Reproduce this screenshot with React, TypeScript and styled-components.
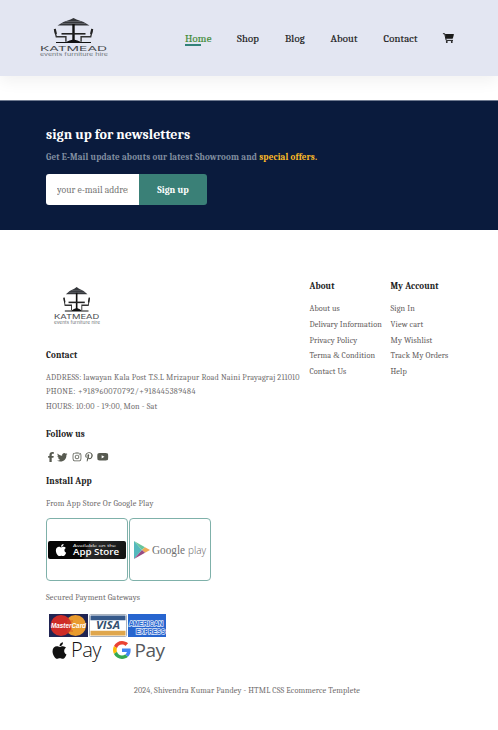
import React from "react";
import styled, { createGlobalStyle } from "styled-components";
import { FaTwitter, FaInstagram, FaPinterestP, FaYoutube, FaApple } from "react-icons/fa";
import { FaFacebookF } from "react-icons/fa6";

const GlobalStyle = createGlobalStyle`
  * { box-sizing: border-box; margin: 0; padding: 0; }
  body { background: #fff; font-family: Cambria, Caladea, "Liberation Serif", serif; color: #222; overflow: hidden; }
  svg { display: block; overflow: visible; }
`;

const Page = styled.div`width: 498px; height: 730px; overflow: hidden;`;

const Header = styled.header`
  display: flex;
  justify-content: space-between;
  height: 76px;
  padding: 17px 44px 0 40px;
  background: #e3e6f2;
  box-shadow: 0 5px 15px rgba(0, 0, 0, 0.06);
`;

const Nav = styled.nav`
  display: flex;
  align-items: flex-start;
  padding-top: 15px;
`;

const NavLink = styled.a<{ $active?: boolean; $width: number }>`
  position: relative;
  width: ${(p) => p.$width}px;
  font-size: 10.6px;
  line-height: 14px;
  -webkit-text-stroke: 0.18px currentColor;
  letter-spacing: 0.19px;
  white-space: nowrap;
  color: ${(p) => (p.$active ? "#3d8a35" : "#1a1a1a")};
  ${(p) =>
    p.$active &&
    `&::after { content: ""; position: absolute; left: 0; bottom: 0; width: 16px; height: 2px; background: #328279; }`}
`;

const CartLink = styled.a`padding-top: 1px; color: #1a1a1a;`;

const Newsletter = styled.section`
  height: 130px;
  margin-top: 24px;
  padding: 25px 46px 0;
  border-top: 1px solid #6f7a90;
  background: #0a1b3d;
`;

const NewsTitle = styled.h4`
  font-size: 14px;
  line-height: 18px;
  color: #fff;
`;

const NewsText = styled.p`
  margin-top: 7px;
  font-size: 9px;
  line-height: 12px;
  font-weight: 700;
  letter-spacing: 0.16px;
  white-space: nowrap;
  color: #818ea0;
  span { color: #ffbd27; }
`;

const Form = styled.form`
  display: flex;
  width: 161px;
  height: 31px;
  margin-top: 11px;
`;

const EmailInput = styled.input`
  width: 93px;
  padding: 0 11px;
  border: 0;
  border-radius: 3px 0 0 3px;
  background: #fff;
  font: 9.7px Cambria, Caladea, serif;
  &::placeholder { color: #757575; }
`;

const SignUp = styled.button`
  width: 68px;
  border: 0;
  border-radius: 0 3px 3px 0;
  background: #3a8077;
  color: #fff;
  font: 700 9.5px Cambria, Caladea, serif;
`;

const Footer = styled.footer`
  display: flex;
  height: 450px;
  padding: 50px 46px 0;
`;

const Info = styled.div`width: 263.5px; padding-top: 5.5px;`;
const FooterLogo = styled.div`height: 63.5px; padding-left: 8px;`;

const Heading = styled.h4<{ $gap?: number }>`
  margin-top: ${(p) => p.$gap ?? 0}px;
  font-size: 9px;
  line-height: 12px;
  letter-spacing: 0.12px;
  white-space: nowrap;
  color: #222;
`;

const Line = styled.p<{ $gap?: number; $spacing?: number }>`
  margin-top: ${(p) => p.$gap ?? 0}px;
  font-size: 8.2px;
  line-height: 14.6px;
  letter-spacing: ${(p) => p.$spacing ?? 0.165}px;
  white-space: nowrap;
  color: #706e6e;
`;

const Social = styled.div`
  display: flex;
  align-items: center;
  height: 12px;
  margin-top: 11px;
  color: #575a50;
`;

const SocialIcon = styled.a<{ $width: number }>`width: ${(p) => p.$width}px;`;

const Column = styled.div<{ $width: number }>`width: ${(p) => p.$width}px;`;
const LinkList = styled.div<{ $spacing: number }>`
  display: grid;
  margin-top: 9px;
  grid-auto-rows: 15.7px;
  align-items: center;
  font-size: 8.2px;
  letter-spacing: ${(p) => p.$spacing}px;
  white-space: nowrap;
  color: #5f5c5c;
`;
const Ampersand = styled.span`font-family: "Liberation Serif", serif;`;

const Stores = styled.div`display: flex; gap: 1px; margin-top: 7px;`;
const StoreBox = styled.div`
  display: flex;
  align-items: center;
  justify-content: center;
  width: 82px;
  height: 63px;
  border: 1px solid #7fb1aa;
  border-radius: 4px;
`;

const AppBadge = styled.div`
  display: flex;
  align-items: center;
  flex-shrink: 0;
  gap: 5px;
  width: 78px;
  height: 18px;
  padding-left: 6px;
  border-radius: 2px;
  background: linear-gradient(110deg, #050505 48%, #2c2c2c 52%, #111);
  color: #fff;
`;

const Payments = styled.div`
  display: grid;
  grid-template-columns: 40px 38.5px 38px;
  width: 117px;
  margin: 9px 0 0 3px;
`;

const Wallets = styled.div`
  display: flex;
  align-items: center;
  height: 26px;
  margin-left: 4px;
`;

const Wallet = styled.div<{ $width: number; $bold?: boolean }>`
  display: flex;
  align-items: center;
  gap: ${(p) => (p.$bold ? 4 : 2)}px;
  width: ${(p) => p.$width}px;
  font-family: "Open Sans", sans-serif;
  font-size: ${(p) => (p.$bold ? 19 : 20)}px;
  line-height: 26px;
  letter-spacing: -0.5px;
  font-weight: ${(p) => (p.$bold ? 500 : 300)};
  color: ${(p) => (p.$bold ? "#55585c" : "#111")};
`;

const Copyright = styled.p`
  margin-top: 4px;
  padding-left: 134px;
  font-size: 8.2px;
  line-height: 14px;
  letter-spacing: 0.135px;
  white-space: nowrap;
  color: #706e6e;
`;

const Logo = ({ width, height }: { width: number; height: number }) => (
  <svg width={width} height={height} viewBox="0 0 68 40" preserveAspectRatio="none">
    <path d="M17.5 8.5Q23 4.6 30.5 2.6L33.5 1L36.5 2.6Q44 4.6 49.5 8.5Z" fill="#34363a" />
    <path d="M26 4.5h15M21.5 6.5h24" stroke="#888b91" strokeWidth=".5" />
    <path d="M33.5 7v18" stroke="#111" strokeWidth="2.4" />
    <path d="M21.5 16.8h24" stroke="#222" strokeWidth="1.6" />
    <path d="M14.5 12l1.8 7.8h9.6v5M52.5 12l-1.8 7.8h-9.6v5" fill="none" stroke="#333" strokeWidth="1.4" />
    <path d="M14.8 12l1.2 5M52.2 12l-1.2 5" stroke="#222" strokeWidth="2" />
    <path d="M16 25h35v1.1h-35zM25.5 25.3q4-2.4 8-2.8q4 .4 8 2.8z" fill="#111" />
    <text x="0" y="33.5" textLength="67" lengthAdjust="spacingAndGlyphs" fontFamily="Inter, sans-serif" fontSize="6.8" fill="#44464a">KATMEAD</text>
    <text x="0" y="38.8" textLength="68" lengthAdjust="spacingAndGlyphs" fontFamily="Inter, sans-serif" fontSize="4.2" fill="#70757a">events furniture hire</text>
  </svg>
);

const Cart = () => (
  <svg width="11" height="10" viewBox="0 0 11 10">
    <path d="M.3.7h1.4l1.5 6.7h6.4" fill="none" stroke="currentColor" strokeWidth="1" strokeLinecap="round" strokeLinejoin="round" />
    <path d="M2 .9h8.5q.5 0 .4.5l-1 3.9q-.1.4-.6.4H3z" fill="currentColor" />
    <circle cx="3.8" cy="9" r=".95" fill="currentColor" />
    <circle cx="8.8" cy="9" r=".95" fill="currentColor" />
  </svg>
);

const BadgeText = () => (
  <svg width="48" height="16" viewBox="0 0 48 16" fontFamily="Open Sans, sans-serif" fill="#fff">
    <text x="0" y="5" textLength="43" lengthAdjust="spacingAndGlyphs" fontSize="4">Available on the</text>
    <text x="0" y="13.2" textLength="46" lengthAdjust="spacingAndGlyphs" fontSize="8.2" fontWeight="600">App Store</text>
  </svg>
);

const GooglePlay = () => (
  <svg width="74" height="22" viewBox="0 0 74 22">
    <path d="M1 2L9 11L1 20Z" fill="#55b9bd" />
    <path d="M1 2L12 8.3L9 11Z" fill="#68c59b" />
    <path d="M12 8.3L17 11L12 13.8L9 11Z" fill="#efaa55" />
    <path d="M1 20L9 11L12 13.8Z" fill="#984b83" />
    <text x="19" y="15.2" textLength="33" lengthAdjust="spacingAndGlyphs" fontFamily="Liberation Serif, serif" fontSize="13" fill="#707070">Google</text>
    <text x="55" y="15.2" textLength="18" lengthAdjust="spacingAndGlyphs" fontFamily="Open Sans, sans-serif" fontWeight="300" fontSize="11.5" fill="#606060">play</text>
  </svg>
);

const MasterCard = () => (
  <svg width="39" height="23" viewBox="0 0 39 23">
    <rect width="39" height="23" fill="#202452" />
    <circle cx="26.5" cy="11.5" r="10.5" fill="#e99b2e" />
    <circle cx="12" cy="11.5" r="10.5" fill="#ce2c27" />
    <path d="M18 7h6M18 9h5M18 15h5M18 17h6" stroke="#d44b2a" strokeWidth=".8" />
    <text x="2" y="14" textLength="35" lengthAdjust="spacingAndGlyphs" fontFamily="Liberation Sans, sans-serif" fontSize="7" fontWeight="700" fontStyle="italic" fill="#fff">MasterCard</text>
  </svg>
);

const Visa = () => (
  <svg width="38" height="23" viewBox="0 0 38 23">
    <rect x=".5" y=".5" width="37" height="22" rx="1" fill="#fff" stroke="#a9b2bd" />
    <path d="M1.5 1.5h35v4.8h-35z" fill="#36598a" />
    <path d="M1.5 16.7h35v4.8h-35z" fill="#dfa64c" />
    <text x="7" y="15" textLength="24" lengthAdjust="spacingAndGlyphs" fontFamily="Open Sans, sans-serif" fontSize="10" fontWeight="700" fontStyle="italic" fill="#34506f">VISA</text>
  </svg>
);

const Amex = () => (
  <svg width="38" height="23" viewBox="0 0 38 23">
    <rect width="38" height="23" fill="#2765cf" />
    <g fontFamily="Liberation Sans, sans-serif" fontSize="6.3" fontWeight="700" fill="#2765cf" stroke="#e0e9fa" strokeWidth="1.4" paintOrder="stroke">
      <text x="1" y="12.2" textLength="34" lengthAdjust="spacingAndGlyphs">AMERICAN</text>
      <text x="8" y="20" textLength="29" lengthAdjust="spacingAndGlyphs">EXPRESS</text>
    </g>
  </svg>
);

const GoogleG = () => (
  <svg width="18" height="18" viewBox="0 0 48 48">
    <path fill="#EA4335" d="M24 9.5c3.54 0 6.71 1.22 9.21 3.6l6.85-6.85C35.9 2.38 30.47 0 24 0 14.62 0 6.51 5.38 2.56 13.22l7.98 6.19C12.43 13.72 17.74 9.5 24 9.5z" />
    <path fill="#4285F4" d="M46.98 24.55c0-1.57-.15-3.09-.38-4.55H24v9.02h12.94c-.58 2.96-2.26 5.48-4.78 7.18l7.73 6c4.51-4.18 7.09-10.36 7.09-17.65z" />
    <path fill="#FBBC05" d="M10.53 28.59A14.5 14.5 0 0 1 9.77 24c0-1.6.27-3.14.76-4.59l-7.98-6.19A24 24 0 0 0 0 24c0 3.88.92 7.54 2.56 10.78z" />
    <path fill="#34A853" d="M24 48c6.48 0 11.93-2.13 15.89-5.81l-7.73-6c-2.15 1.45-4.92 2.3-8.16 2.3-6.26 0-11.57-4.22-13.47-9.91l-7.98 6.19C6.51 42.62 14.62 48 24 48z" />
  </svg>
);

export default function App() {
  return (
    <Page>
      <GlobalStyle />
      <Header>
        <Logo width={68} height={40} />
        <Nav>
          <NavLink $active $width={52}>Home</NavLink>
          <NavLink $width={48}>Shop</NavLink>
          <NavLink $width={45.5}>Blog</NavLink>
          <NavLink $width={53}>About</NavLink>
          <NavLink $width={59.5}>Contact</NavLink>
          <CartLink><Cart /></CartLink>
        </Nav>
      </Header>
      <Newsletter>
        <NewsTitle>sign up for newsletters</NewsTitle>
        <NewsText>Get E-Mail update abouts our latest Showroom and <span>special offers.</span></NewsText>
        <Form>
          <EmailInput placeholder="your e-mail address" />
          <SignUp type="button">Sign up</SignUp>
        </Form>
      </Newsletter>
      <Footer>
        <Info>
          <FooterLogo><Logo width={46} height={39} /></FooterLogo>
          <Heading>Contact</Heading>
          <Line $gap={9.6}>ADDRESS: lawayan Kala Post T.S.L Mrizapur Road Naini Prayagraj 211010</Line>
          <Line $spacing={0.43}>PHONE: +918960070792/+918445389484</Line>
          <Line $spacing={0.18}>HOURS: 10:00 - 19:00, Mon - Sat</Line>
          <Heading $gap={13.4}>Follow us</Heading>
          <Social>
            <SocialIcon $width={11}><FaFacebookF size={10} width="6.25" /></SocialIcon>
            <SocialIcon $width={14.5}><FaTwitter size={10.5} /></SocialIcon>
            <SocialIcon $width={12.5}><FaInstagram size={10} /></SocialIcon>
            <SocialIcon $width={13}><FaPinterestP size={10} /></SocialIcon>
            <SocialIcon $width={12}><FaYoutube size={11.5} /></SocialIcon>
          </Social>
          <Heading $gap={12}>Install App</Heading>
          <Line $gap={10} $spacing={0.22}>From App Store Or Google Play</Line>
          <Stores>
            <StoreBox>
              <AppBadge>
                <FaApple size={14} />
                <BadgeText />
              </AppBadge>
            </StoreBox>
            <StoreBox><GooglePlay /></StoreBox>
          </Stores>
          <Line $gap={9.5}>Secured Payment Gateways</Line>
          <Payments><MasterCard /><Visa /><Amex /></Payments>
          <Wallets>
            <Wallet $width={62.5}><FaApple size={19} />Pay</Wallet>
            <Wallet $width={60} $bold><GoogleG />Pay</Wallet>
          </Wallets>
        </Info>
        <Column $width={81}>
          <Heading>About</Heading>
          <LinkList $spacing={0.09}>
            <a>About us</a><a>Delivary Information</a><a>Privacy Policy</a><a>Terma <Ampersand>&amp;</Ampersand> Condition</a><a>Contact Us</a>
          </LinkList>
        </Column>
        <Column $width={60}>
          <Heading>My Account</Heading>
          <LinkList $spacing={0.12}>
            <a>Sign In</a><a>View cart</a><a>My Wishlist</a><a>Track My Orders</a><a>Help</a>
          </LinkList>
        </Column>
      </Footer>
      <Copyright>2024, Shivendra Kumar Pandey - HTML CSS Ecommerce Templete</Copyright>
    </Page>
  );
}
